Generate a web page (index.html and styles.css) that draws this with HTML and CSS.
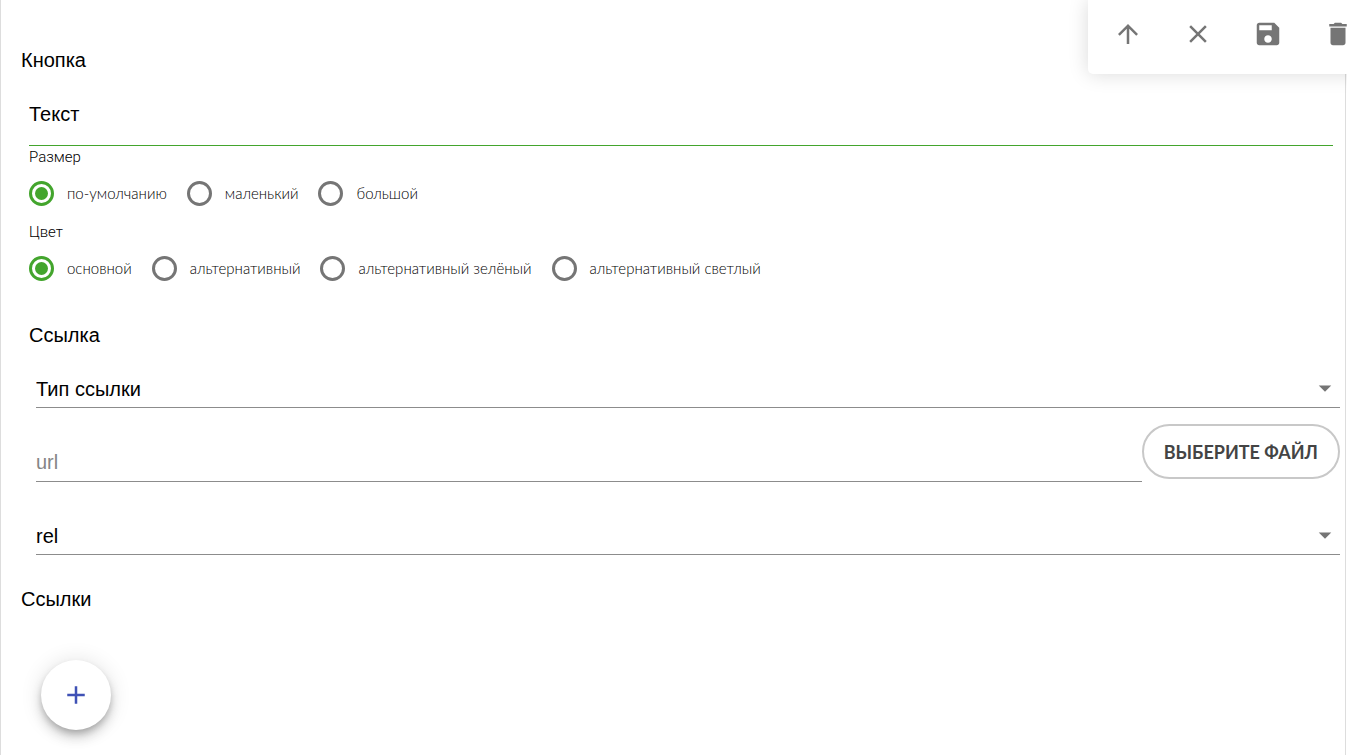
FILE: index.html
```
<!DOCTYPE html>
<html lang="ru">
<head>
  <meta charset="UTF-8">
  <meta name="viewport" content="width=device-width, initial-scale=1">
  <title>Кнопка</title>
  <link rel="stylesheet" href="styles.css">
</head>
<body>
  <div class="toolbar">
    <button type="button" class="icon-btn" aria-label="Вверх">
      <svg class="icon" viewBox="0 0 24 24"><path d="M4 12l1.41 1.41L11 7.83V20h2V7.83l5.58 5.59L20 12l-8-8-8 8z"/></svg>
    </button>
    <button type="button" class="icon-btn" aria-label="Закрыть">
      <svg class="icon" viewBox="0 0 24 24"><path d="M19 6.41L17.59 5 12 10.59 6.41 5 5 6.41 10.59 12 5 17.59 6.41 19 12 13.41 17.59 19 19 17.59 13.41 12z"/></svg>
    </button>
    <button type="button" class="icon-btn" aria-label="Сохранить">
      <svg class="icon" viewBox="0 0 24 24"><path d="M17 3H5c-1.11 0-2 .9-2 2v14c0 1.1.89 2 2 2h14c1.1 0 2-.9 2-2V7l-4-4zm-5 16c-1.66 0-3-1.34-3-3s1.34-3 3-3 3 1.34 3 3-1.34 3-3 3zm3-10H5V5h10v4z"/></svg>
    </button>
    <button type="button" class="icon-btn" aria-label="Удалить">
      <svg class="icon" viewBox="0 0 24 24"><path d="M6 19c0 1.1.9 2 2 2h8c1.1 0 2-.9 2-2V7H6v12zM19 4h-3.5l-1-1h-5l-1 1H5v2h14V4z"/></svg>
    </button>
  </div>

  <form class="editor">
    <h2 class="title">Кнопка</h2>
    <div class="group">
      <input class="text-input text-input-active" type="text" aria-label="Текст" placeholder="Текст">

      <fieldset class="radios">
        <legend>Размер</legend>
        <div class="radio-row">
          <label class="radio"><input type="radio" name="size" checked>по-умолчанию</label>
          <label class="radio"><input type="radio" name="size">маленький</label>
          <label class="radio"><input type="radio" name="size">большой</label>
        </div>
      </fieldset>
      <fieldset class="radios">
        <legend>Цвет</legend>
        <div class="radio-row">
          <label class="radio"><input type="radio" name="color" checked>основной</label>
          <label class="radio"><input type="radio" name="color">альтернативный</label>
          <label class="radio"><input type="radio" name="color">альтернативный зелёный</label>
          <label class="radio"><input type="radio" name="color">альтернативный светлый</label>
        </div>
      </fieldset>

      <h2 class="title title-link">Ссылка</h2>
      <div class="link-fields">
        <div class="select-wrap">
          <select class="select" aria-label="Тип ссылки"><option>Тип ссылки</option></select>
          <svg class="arrow" viewBox="0 0 24 24"><path d="M7 10l5 5 5-5z"/></svg>
        </div>
        <div class="url-row">
          <input class="text-input" type="text" aria-label="url" placeholder="url">
          <button type="button" class="file-btn">Выберите файл</button>
        </div>
        <div class="select-wrap">
          <select class="select" aria-label="rel"><option>rel</option></select>
          <svg class="arrow" viewBox="0 0 24 24"><path d="M7 10l5 5 5-5z"/></svg>
        </div>
      </div>
    </div>

    <h2 class="title">Ссылки</h2>
    <button type="button" class="add-btn" aria-label="Добавить">
      <svg class="icon" viewBox="0 0 24 24"><path d="M19 13h-6v6h-2v-6H5v-2h6V5h2v6h6v2z"/></svg>
    </button>
  </form>
</body>
</html>
```
FILE: styles.css
```
* {
  box-sizing: border-box;
}
body {
  margin: 0;
  overflow-x: hidden;
  background: #fff;
  color: #000;
  font-family: "Liberation Sans", Arial, sans-serif;
  font-size: 20px;
  line-height: 24px;
}
button, input, select {
  margin: 0;
  font: inherit;
  color: inherit;
}

/* Toolbar, runs past the right edge */
.toolbar {
  position: absolute;
  top: 0;
  right: -31px;
  z-index: 2;
  display: flex;
  padding: 0 5px 6px;
  background: #fff;
  border-radius: 0 0 5px 5px;
  box-shadow: 0 0 20px rgba(0, 0, 0, 0.15);
}
.icon-btn {
  display: flex;
  align-items: center;
  justify-content: center;
  width: 70px;
  height: 68px;
  padding: 0;
  border: 0;
  background: none;
  color: #757575;
}
.icon {
  width: 30px;
  height: 30px;
  fill: currentColor;
}

.editor {
  min-height: 100vh;
  margin-right: 1px;
  padding: 48px 5px 24px 20px;
  border: solid #ddd;
  border-width: 0 1px;
}
.title {
  margin: 0;
  font-size: 20px;
  font-weight: normal;
}
.group {
  padding: 20px 0 32px 8px;
}

.text-input {
  display: block;
  width: 100%;
  height: 54px;
  padding: 0 0 8px;
  border: 0;
  border-bottom: 1px solid #8c8c8c;
  border-radius: 0;
  background: none;
  outline: 0;
}
.text-input::placeholder {
  color: #858585;
  opacity: 1;
}
.group > .text-input {
  width: calc(100% - 7px);
}
.text-input-active {
  border-bottom-color: #43a52d;
}
.text-input-active::placeholder {
  color: #000;
}

.radios {
  min-width: 0;
  margin: 0;
  padding: 0;
  border: 0;
  font-size: 15px;
  font-weight: 300;
}
.radios legend {
  padding: 0;
  font-family: Roboto, sans-serif;
  line-height: 22px;
}
.radio-row {
  display: flex;
  flex-wrap: wrap;
  gap: 20px;
  height: 53px;
  font-family: Lato, "Open Sans", sans-serif;
}
.radio {
  display: flex;
  align-items: center;
  gap: 13px;
  height: 51px;
  line-height: 23px;
}
.radio input {
  display: grid;
  place-items: center;
  width: 25px;
  height: 25px;
  border: 3px solid #757575;
  border-radius: 50%;
  appearance: none;
}
.radio input:checked {
  border-color: #43a52d;
}
.radio input:checked::before {
  content: "";
  width: 13px;
  height: 13px;
  border-radius: 50%;
  background: #43a52d;
}

.title-link {
  padding-top: 27px;
}
.link-fields {
  padding: 23px 0 0 7px;
}
.select-wrap {
  position: relative;
}
.select {
  display: block;
  width: 100%;
  height: 38px;
  padding: 0 30px 0 0;
  border: 0;
  border-bottom: 1px solid #8c8c8c;
  border-radius: 0;
  background: none;
  appearance: none;
}
.arrow {
  position: absolute;
  top: 3px;
  right: 0;
  width: 30px;
  height: 30px;
  fill: #757575;
  pointer-events: none;
}
.url-row {
  display: flex;
  align-items: flex-start;
  padding: 16px 0 35px;
}
.url-row .text-input {
  flex: 1;
  height: 58px;
  padding: 20px 0 0;
}
.file-btn {
  height: 55px;
  padding: 0 20px;
  border: 2px solid #c8c8c8;
  border-radius: 28px;
  background: #fff;
  color: #444;
  font-family: Lato, "Open Sans", sans-serif;
  font-size: 18px;
  font-weight: bold;
  text-transform: uppercase;
}

.add-btn {
  display: flex;
  align-items: center;
  justify-content: center;
  width: 70px;
  height: 70px;
  margin: 49px 0 0 20px;
  padding: 0;
  border: 0;
  border-radius: 50%;
  background: #fff;
  color: #3f51b5;
  box-shadow: 0 4px 6px -1px rgba(0, 0, 0, 0.2), 0 8px 12px rgba(0, 0, 0, 0.14), 0 1px 22px rgba(0, 0, 0, 0.12);
}
```
